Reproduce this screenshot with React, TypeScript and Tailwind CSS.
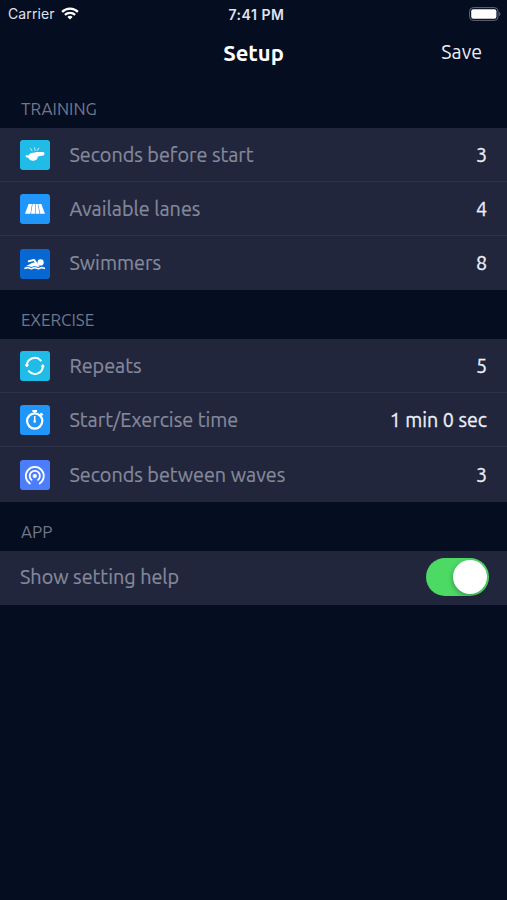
import { useState, type ReactNode } from 'react';

function WhistleIcon() {
  return (
    <svg viewBox="0 0 30 30" className="w-full h-full" fill="white">
      <path d="M8.4 15.6 6.3 15.3a.9.9 0 0 0-.2 1.7l2.3.9a5 5 0 0 0 9.5-1.5l5.3-.9a1.4 1.4 0 0 0 1.2-1.4v-.8a1.4 1.4 0 0 0-1.4-1.4h-6.4l-3 .8a5 5 0 0 0-5.2 2.9z" />
      <path d="m10.6 8.4 1.4 2.4M14.6 7.8l.4 2.4M18.8 8.2l-1.8 2.4" stroke="white" strokeOpacity=".7" strokeWidth="1" strokeLinecap="round" />
    </svg>
  );
}

function LanesIcon() {
  return (
    <svg viewBox="0 0 30 30" className="w-full h-full" fill="white">
      <path d="M8.6 10h3.4L10.4 19.8H5z" />
      <path d="M12.6 10h2.6l-.3 9.8H11z" />
      <path d="M15.7 10h1.9l2 9.8h-4.1z" />
      <path d="M18.2 10h3.1l3.7 9.8h-4.8z" />
    </svg>
  );
}

function SwimmerIcon() {
  return (
    <svg viewBox="0 0 30 30" className="w-full h-full">
      <g fill="white">
        <circle cx="20.6" cy="13.4" r="3.1" />
        <path d="M8.8 12.2 14 10.9l3 4.3" fill="none" stroke="white" strokeWidth="2" strokeLinecap="round" strokeLinejoin="round" />
        <path d="m5.8 17.2 6.6-3.4 4.2-.3 3 3.8-1.4.7-3.5-1-3.5 1-3.2-.9z" />
      </g>
      <path d="M4.4 19.4c1.7 0 1.8-.8 3.4-.8s1.8 1.2 3.5 1.2 1.8-1.2 3.5-1.2 1.8 1.2 3.5 1.2 1.8-1.2 3.5-1.2 1.7.8 3.2.8" fill="none" stroke="white" strokeWidth="1.6" />
    </svg>
  );
}

function RepeatIcon() {
  return (
    <svg viewBox="0 0 30 30" className="w-full h-full" fill="none" stroke="white" strokeWidth="2">
      <path d="M6.8 14A8 8 0 0 1 20.8 9.6M22.8 15.8A8 8 0 0 1 8.8 20.2" strokeLinecap="round" />
      <path d="m5.4 13.9 1.4 2.1 1.6-2.1zM21.2 15.6l1.6-2.1 1.4 2.1z" fill="white" strokeWidth="1" strokeLinejoin="round" />
    </svg>
  );
}

function StopwatchIcon() {
  return (
    <svg viewBox="0 0 30 30" className="w-full h-full" fill="none" stroke="white">
      <circle cx="14.7" cy="16" r="7.6" strokeWidth="2.2" />
      <path d="M12.4 6h4.6M14.7 6.3v2M20.6 8.2l2.2 2M21.4 9.6l-1.6 1.6" strokeWidth="1.8" />
      <path d="M14.7 11v5.6" strokeWidth="1.5" />
      <circle cx="14.7" cy="16.4" r="1.3" fill="white" stroke="none" />
    </svg>
  );
}

function WavesIcon() {
  return (
    <svg viewBox="0 0 30 30" className="w-full h-full" fill="none" stroke="white" strokeWidth="1.8" strokeLinecap="round">
      <circle cx="14.8" cy="16" r="2.1" fill="white" stroke="none" />
      <path d="M11.6 19.9a5.1 5.1 0 1 1 6.4 0" />
      <path d="M9.9 23.5a9 9 0 1 1 9.8 0" />
    </svg>
  );
}

function StatusBar() {
  return (
    <div className="h-[27px] grid grid-cols-3 items-center pl-2 pr-[6px] font-['Inter','Liberation_Sans',sans-serif] text-[#dfe3ef]">
      <div className="flex items-center gap-[6px]">
        <span className="text-[14px] tracking-[0.1px]">Carrier</span>
        <svg viewBox="0 0 18 13" className="w-[18px] h-[13px]" fill="none" stroke="white" strokeWidth="2.2">
          <path d="M1.1 4.9a11.2 11.2 0 0 1 15.8 0M3.9 7.9a7.2 7.2 0 0 1 10.2 0" />
          <path d="M9 12.6 6.4 10a3.7 3.7 0 0 1 5.2 0z" fill="white" stroke="none" />
        </svg>
      </div>
      <span className="text-center text-[14px] font-semibold tracking-[0.55px] whitespace-nowrap pl-1 pt-px">7:41 PM</span>
      <svg viewBox="0 0 32 14" className="w-8 h-[14px] justify-self-end">
        <rect x=".6" y=".6" width="28.4" height="12.8" rx="3.6" fill="none" stroke="#646977" strokeWidth="1" />
        <rect x="2.2" y="2.2" width="25.2" height="9.6" rx="2" fill="white" />
        <path d="M30.2 4.8c1.6.8 1.6 3.6 0 4.4z" fill="#646977" />
      </svg>
    </div>
  );
}

function Section({ title, children }: { title: string; children: ReactNode }) {
  return (
    <section>
      <h2 className="h-[49px] pt-[18px] pl-[21px] text-[17px] leading-6 text-[#71778a]">{title}</h2>
      <div className="bg-[#22263d] divide-y divide-[#2d3149]">{children}</div>
    </section>
  );
}

type RowProps = { icon: ReactNode; tile: string; label: string; value: string };

function Row({ icon, tile, label, value }: RowProps) {
  return (
    <div className="h-[54.1px] flex items-center pt-px pl-[20.4px] pr-5">
      <div className={`w-[30px] h-[30px] rounded-[3px] shrink-0 ${tile}`}>{icon}</div>
      <span className="ml-[19px] pt-px flex-1 text-[19.8px] text-[#858a9b] [-webkit-text-stroke:0.2px] whitespace-nowrap">{label}</span>
      <span className="pt-px text-[19.7px] text-[#eceef8] [-webkit-text-stroke:0.3px] whitespace-nowrap">{value}</span>
    </div>
  );
}

export default function App() {
  const [showHelp, setShowHelp] = useState(true);

  return (
    <div className="w-full h-screen overflow-hidden bg-[#050d21] font-['Ubuntu','Noto_Sans',sans-serif]">
      <StatusBar />
      <header className="h-[52px] grid grid-cols-3 items-center pr-[25px]">
        <span />
        <h1 className="text-center text-[22px] font-bold text-white pl-[25px] pb-[2px]">Setup</h1>
        <button className="justify-self-end text-[19.6px] text-[#eceef8]">Save</button>
      </header>

      <Section title="TRAINING">
        <Row icon={<WhistleIcon />} tile="bg-[#21bbe8]" label="Seconds before start" value="3" />
        <Row icon={<LanesIcon />} tile="bg-[#2196fa]" label="Available lanes" value="4" />
        <Row icon={<SwimmerIcon />} tile="bg-[#0868d2]" label="Swimmers" value="8" />
      </Section>
      <Section title="EXERCISE">
        <Row icon={<RepeatIcon />} tile="bg-[#21bbe8]" label="Repeats" value="5" />
        <Row icon={<StopwatchIcon />} tile="bg-[#2196fa]" label="Start/Exercise time" value="1 min 0 sec" />
        <Row icon={<WavesIcon />} tile="bg-[#4c7dfb]" label="Seconds between waves" value="3" />
      </Section>
      <Section title="APP">
        <div className="h-[54px] flex items-center justify-between pl-5 pr-[18px]">
          <span className="text-[19.8px] text-[#858a9b] [-webkit-text-stroke:0.2px]">Show setting help</span>
          <button
            role="switch"
            aria-checked={showHelp}
            onClick={() => setShowHelp(!showHelp)}
            className={`w-[63px] h-[38px] p-[2px] mb-[2px] rounded-full flex items-center ${showHelp ? 'justify-end bg-[#4cd964]' : 'justify-start bg-[#3a3f57]'}`}
          >
            <span className="w-[34px] h-[34px] rounded-full bg-white shadow-[-1px_2px_4px_rgba(0,0,0,0.25)]" />
          </button>
        </div>
      </Section>
    </div>
  );
}
